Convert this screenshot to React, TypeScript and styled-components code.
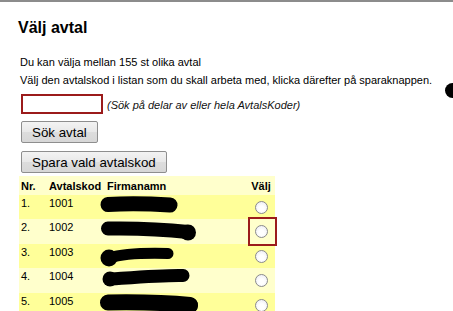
import { FC } from "react";
import styled, { createGlobalStyle } from "styled-components";

const SANS = `"Liberation Sans", Arimo, Arial, Helvetica, sans-serif`;

const GlobalStyle = createGlobalStyle`
  html, body {
    margin: 0;
    padding: 0;
    background: #fff;
  }
  body {
    font-family: ${SANS};
    color: #000;
  }
`;

const Page = styled.div`
  position: relative;
  min-height: 311px;
  box-sizing: border-box;
  border-top: 2px solid #8c8c8c;
  padding: 16px 0 0 18px;
  overflow: hidden;
  font-family: ${SANS};
`;

const Title = styled.h1`
  margin: 0;
  font-size: 16px;
  line-height: 19px;
  font-weight: bold;
`;

const Notes = styled.div`
  margin-top: 16px;
  padding-left: 2px;
  font-size: 11px;
  line-height: 18px;
  white-space: nowrap;

  p {
    margin: 0;
  }
`;

const SearchRow = styled.div`
  display: flex;
  align-items: center;
  margin: 5px 0 0 3px;
`;

const SearchInput = styled.input`
  box-sizing: border-box;
  width: 82px;
  height: 20px;
  margin: 0;
  border: 2px solid #9b1b1b;
  background: #fff;
  padding: 0 2px;
  font: 11px ${SANS};
`;

const Hint = styled.span`
  margin-left: 4px;
  padding-top: 2px;
  font-size: 11px;
  font-style: italic;
  color: #111;
`;

const Button = styled.button<{ $gap: number }>`
  display: block;
  box-sizing: border-box;
  height: 22px;
  margin: ${(p) => p.$gap}px 0 0 3px;
  padding: 0 10px;
  border: 1px solid #8e8e8e;
  border-radius: 2px;
  background: linear-gradient(#f3f3f3, #e8e8e8 50%, #dddddd 51%, #d7d7d7);
  font: 13.333px ${SANS};
  color: #000;
`;

const Table = styled.table`
  margin: 3px 0 0 1px;
  width: 256px;
  table-layout: fixed;
  border-collapse: collapse;
  border-spacing: 0;
  font-size: 11px;
  line-height: 14px;
`;

const HeadRow = styled.tr`
  height: 19px;
  background: #ffffcc;
`;

const Th = styled.th<{ $w: number; $center?: boolean }>`
  box-sizing: border-box;
  width: ${(p) => p.$w}px;
  padding: 0 ${(p) => (p.$center ? 0 : 2)}px 0 2px;
  text-align: ${(p) => (p.$center ? "center" : "left")};
  vertical-align: middle;
  font-weight: bold;
  white-space: nowrap;
`;

const Row = styled.tr`
  height: 24px;
  background: #ffff99;

  &:nth-child(even) {
    height: 25px;
    background: #ffffcc;
  }
`;

const Td = styled.td`
  padding: 1px 2px 0;
  vertical-align: top;
  white-space: nowrap;
`;

const NameCell = styled(Td)`
  position: relative;
`;

const Redaction = styled.svg`
  position: absolute;
  left: -5px;
  top: 0;
  overflow: visible;
`;

const PickCell = styled.td`
  padding: 0 0 0 2px;
  vertical-align: middle;
`;

const PickWrap = styled.span<{ $marked?: boolean }>`
  position: relative;
  display: block;
  width: 13px;
  height: 13px;
  margin: 0 auto;

  &::after {
    content: "";
    display: ${(p) => (p.$marked ? "block" : "none")};
    position: absolute;
    left: -7px;
    top: -8px;
    width: 25px;
    height: 25px;
    border: 2px solid #9b1b1b;
  }
`;

const Radio = styled.input`
  appearance: none;
  display: block;
  box-sizing: border-box;
  width: 13px;
  height: 13px;
  margin: 0;
  border: 1px solid #8a8a8a;
  border-radius: 50%;
  background: radial-gradient(circle at 50% 60%, #ffffff 30%, #e8e8f0 100%);
`;

const Dot = styled.span`
  position: absolute;
  left: 445px;
  top: 81px;
  width: 15px;
  height: 15px;
  border-radius: 50%;
  background: #000;
`;

type Blob = { d: string; dots?: [number, number, number][]; w: number };

const rows: { nr: string; code: string; blob: Blob }[] = [
  { nr: "1.", code: "1001", blob: { d: "M8 9.5 C30 8 55 9 70 10", w: 15 } },
  {
    nr: "2.",
    code: "1002",
    blob: { d: "M8 9.5 C40 9 66 10.5 88 13", w: 14, dots: [[88, 13.5, 8]] },
  },
  {
    nr: "3.",
    code: "1003",
    blob: { d: "M9 14 C25 9 50 9 68 9.5", w: 11, dots: [[9, 14, 8.5]] },
  },
  {
    nr: "4.",
    code: "1004",
    blob: { d: "M11 11 C40 9 65 7 83 7.5", w: 13, dots: [[10, 11, 7.5]] },
  },
  {
    nr: "5.",
    code: "1005",
    blob: { d: "M8 9.5 C40 9 70 10 90 12", w: 16, dots: [[90, 12.5, 8]] },
  },
];

const App: FC = () => (
  <>
    <GlobalStyle />
    <Page>
      <Title>Välj avtal</Title>
      <Notes>
        <p>Du kan välja mellan 155 st olika avtal</p>
        <p>
          Välj den avtalskod i listan som du skall arbeta med, klicka därefter
          på sparaknappen.
        </p>
      </Notes>
      <SearchRow>
        <SearchInput type="text" />
        <Hint>(Sök på delar av eller hela AvtalsKoder)</Hint>
      </SearchRow>
      <Button $gap={7}>Sök avtal</Button>
      <Button $gap={8}>Spara vald avtalskod</Button>
      <Table>
        <thead>
          <HeadRow>
            <Th $w={28}>Nr.</Th>
            <Th $w={58}>Avtalskod</Th>
            <Th $w={140}>Firmanamn</Th>
            <Th $w={30} $center>
              Välj
            </Th>
          </HeadRow>
        </thead>
        <tbody>
          {rows.map((r, i) => (
            <Row key={r.code}>
              <Td>{r.nr}</Td>
              <Td>{r.code}</Td>
              <NameCell>
                <Redaction width="110" height="24" viewBox="0 0 110 24">
                  <path
                    d={r.blob.d}
                    fill="none"
                    stroke="#000"
                    strokeWidth={r.blob.w}
                    strokeLinecap="round"
                  />
                  {r.blob.dots?.map(([cx, cy, rr]) => (
                    <circle key={cx} cx={cx} cy={cy} r={rr} fill="#000" />
                  ))}
                </Redaction>
              </NameCell>
              <PickCell>
                <PickWrap $marked={i === 1}>
                  <Radio type="radio" name="avtal" />
                </PickWrap>
              </PickCell>
            </Row>
          ))}
        </tbody>
      </Table>
      <Dot />
    </Page>
  </>
);

export default App;
